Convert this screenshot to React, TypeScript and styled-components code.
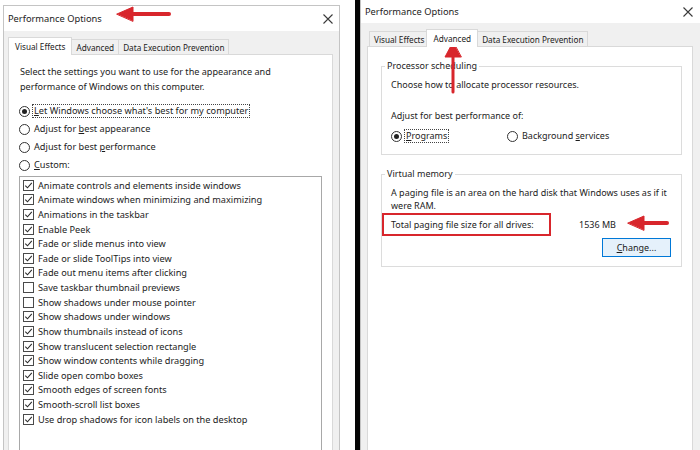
import React from "react";
import styled, { createGlobalStyle, css } from "styled-components";

const GlobalStyle = createGlobalStyle`
  html, body { margin: 0; padding: 0; background: #ffffff; }
  body {
    font-family: "Noto Sans", "Open Sans", "DejaVu Sans", sans-serif;
    color: #1c1c1c;
    -webkit-font-smoothing: antialiased;
  }
`;

const Page = styled.div`
  position: relative;
  display: flex;
  align-items: flex-start;
  width: 700px;
  height: 450px;
  overflow: hidden;
  background: #ffffff;
`;

const Dialog = styled.section<{ $top: number; $left: number; $width: number }>`
  display: flex;
  flex-direction: column;
  flex-shrink: 0;
  margin-top: ${(p) => p.$top}px;
  margin-left: ${(p) => p.$left}px;
  width: ${(p) => p.$width}px;
  height: 470px;
  border: 1px solid #c4c4c4;
  background: #f0f0f0;
  box-sizing: border-box;
  overflow: hidden;
`;

const TitleBar = styled.header<{ $height: number; $padRight: number }>`
  display: flex;
  flex-shrink: 0;
  align-items: center;
  justify-content: space-between;
  height: ${(p) => p.$height}px;
  padding: 0 ${(p) => p.$padRight}px 0 4px;
  background: #ffffff;
`;

const Title = styled.span`
  font-size: 9.3px;
  color: #222;
`;

const CloseIcon = styled.svg`
  width: 10px;
  height: 10px;
  stroke: #3a3a3a;
  stroke-width: 1.1;
`;

const Body = styled.div<{ $pad: string }>`
  display: flex;
  flex-direction: column;
  flex: 1;
  min-height: 0;
  padding: ${(p) => p.$pad};
`;

const TabStrip = styled.div`
  display: flex;
  flex-shrink: 0;
  align-items: flex-end;
  padding-left: 2px;
`;

const Tab = styled.div<{ $active?: boolean }>`
  position: relative;
  display: flex;
  align-items: center;
  height: 15px;
  padding: 0 4px;
  margin-right: -1px;
  font-size: 8.2px;
  color: #222;
  background: #f0f0f0;
  border: 1px solid #d9d9d9;
  border-bottom: none;
  box-sizing: border-box;
  white-space: nowrap;
  ${(p) =>
    p.$active &&
    css`
      z-index: 2;
      height: 18px;
      margin: 0 -1px -1px -2px;
      padding: 0 6px 1px;
      background: #ffffff;
    `}
`;

const TabPanel = styled.div`
  display: flex;
  flex-direction: column;
  flex: 1;
  min-height: 0;
  background: #ffffff;
  border: 1px solid #d9d9d9;
`;

/* ---------- Visual Effects page ---------- */

const Intro = styled.p`
  margin: 9px 0 0 11px;
  font-size: 9.1px;
  line-height: 15px;
  white-space: nowrap;
`;

const OptionList = styled.div`
  display: flex;
  flex-direction: column;
  margin: 8px 0 0 10px;
`;

const OptionRow = styled.label<{ $height?: number }>`
  display: flex;
  align-items: center;
  gap: 3px;
  height: ${(p) => p.$height ?? 18}px;
  font-size: 9.2px;
  white-space: nowrap;
`;

const RadioDot = styled.span<{ $checked?: boolean }>`
  position: relative;
  flex-shrink: 0;
  width: 11px;
  height: 11px;
  border: 1px solid #333;
  border-radius: 50%;
  box-sizing: border-box;
  background: #fff;
  ${(p) =>
    p.$checked &&
    css`
      &::after {
        content: "";
        position: absolute;
        inset: 2px;
        border-radius: 50%;
        background: #222;
      }
    `}
`;

const FocusLabel = styled.span<{ $focused?: boolean }>`
  padding: 0 1px;
  outline: ${(p) => (p.$focused ? "1px dotted #444" : "none")};
  outline-offset: 0;
  line-height: 12px;
`;

const Key = styled.span`
  text-decoration: underline;
  text-underline-offset: 1px;
`;

const ListBox = styled.div`
  display: flex;
  flex-direction: column;
  flex-shrink: 0;
  margin: 2px 10px 0 10px;
  padding: 1px 0 0 3px;
  height: 300px;
  border: 1px solid #a8a8a8;
`;

const CheckRow = styled.div`
  display: flex;
  align-items: center;
  gap: 4px;
  height: 14.62px;
  font-size: 9.2px;
  white-space: nowrap;
`;

const CheckBox = styled.span`
  display: flex;
  align-items: center;
  justify-content: center;
  flex-shrink: 0;
  width: 11px;
  height: 11px;
  border: 1px solid #4a4a4a;
  box-sizing: border-box;
  background: #fff;
`;

/* ---------- Advanced page ---------- */

const Group = styled.fieldset<{ $top: number; $bottomPad: number }>`
  margin: ${(p) => p.$top}px 10px 0 13px;
  padding: 5px 10px ${(p) => p.$bottomPad}px 9px;
  border: 1px solid #dcdcdc;
  min-width: 0;
`;

const Legend = styled.legend`
  margin-left: -6px;
  padding: 0 2px;
  font-size: 9px;
  line-height: 14px;
`;

const Line = styled.p<{ $gap?: number; $lh?: number }>`
  margin: ${(p) => p.$gap ?? 0}px 0 0 0;
  font-size: 9px;
  line-height: ${(p) => p.$lh ?? 14}px;
  white-space: nowrap;
`;

const RadioPair = styled.div`
  display: flex;
  margin-top: 6px;
`;

const PairItem = styled(OptionRow)`
  width: 116px;
  height: 14px;
  font-size: 9px;
`;

const SizeRow = styled.div`
  display: flex;
  align-items: center;
  margin: 1px 0 0 -9px;
  font-size: 9px;
  white-space: nowrap;
`;

const Highlight = styled.div`
  display: flex;
  align-items: center;
  width: 169px;
  height: 23px;
  padding-left: 7px;
  border: 2px solid #d8262c;
  box-sizing: border-box;
`;

const SizeValue = styled.span`
  margin-left: 28px;
`;

const ButtonRow = styled.div`
  display: flex;
  justify-content: flex-end;
  margin-top: 2px;
`;

const Button = styled.button`
  width: 69px;
  height: 19px;
  padding: 0;
  font-family: inherit;
  font-size: 9px;
  color: #1c1c1c;
  background: #e5f1fb;
  border: 1px solid #0078d7;
`;

const Divider = styled.div`
  flex-shrink: 0;
  align-self: stretch;
  width: 5px;
  margin-left: 15px;
  background: #050505;
`;

const Annotations = styled.svg`
  position: absolute;
  left: 0;
  top: 0;
  width: 700px;
  height: 450px;
  pointer-events: none;
`;

const effects: [string, boolean][] = [
  ["Animate controls and elements inside windows", true],
  ["Animate windows when minimizing and maximizing", true],
  ["Animations in the taskbar", true],
  ["Enable Peek", true],
  ["Fade or slide menus into view", true],
  ["Fade or slide ToolTips into view", true],
  ["Fade out menu items after clicking", true],
  ["Save taskbar thumbnail previews", false],
  ["Show shadows under mouse pointer", false],
  ["Show shadows under windows", true],
  ["Show thumbnails instead of icons", true],
  ["Show translucent selection rectangle", true],
  ["Show window contents while dragging", true],
  ["Slide open combo boxes", true],
  ["Smooth edges of screen fonts", true],
  ["Smooth-scroll list boxes", true],
  ["Use drop shadows for icon labels on the desktop", true],
];

const Close = () => (
  <CloseIcon viewBox="0 0 10 10">
    <path d="M0.5 0.5 L9.5 9.5 M9.5 0.5 L0.5 9.5" />
  </CloseIcon>
);

const Tick = () => (
  <svg width="9" height="9" viewBox="0 0 9 9">
    <path d="M1.3 4.6 L3.5 6.8 L7.8 1.9" fill="none" stroke="#2a2a2a" strokeWidth="1.1" />
  </svg>
);

const Tabs = ({ active }: { active: number }) => (
  <TabStrip>
    {["Visual Effects", "Advanced", "Data Execution Prevention"].map((t, i) => (
      <Tab key={t} $active={i === active}>
        {t}
      </Tab>
    ))}
  </TabStrip>
);

const VisualEffects = () => (
  <TabPanel>
    <Intro>
      Select the settings you want to use for the appearance and
      <br />
      performance of Windows on this computer.
    </Intro>
    <OptionList>
      <OptionRow>
        <RadioDot $checked />
        <FocusLabel $focused>
          <Key>L</Key>et Windows choose what's best for my computer
        </FocusLabel>
      </OptionRow>
      <OptionRow>
        <RadioDot />
        <FocusLabel>
          Adjust for <Key>b</Key>est appearance
        </FocusLabel>
      </OptionRow>
      <OptionRow>
        <RadioDot />
        <FocusLabel>
          Adjust for best <Key>p</Key>erformance
        </FocusLabel>
      </OptionRow>
      <OptionRow>
        <RadioDot />
        <FocusLabel>
          <Key>C</Key>ustom:
        </FocusLabel>
      </OptionRow>
    </OptionList>
    <ListBox>
      {effects.map(([label, on]) => (
        <CheckRow key={label}>
          <CheckBox>{on && <Tick />}</CheckBox>
          {label}
        </CheckRow>
      ))}
    </ListBox>
  </TabPanel>
);

const AdvancedPage = () => (
  <TabPanel>
    <Group $top={12} $bottomPad={11}>
      <Legend>Processor scheduling</Legend>
      <Line>Choose how to allocate processor resources.</Line>
      <Line $gap={17}>Adjust for best performance of:</Line>
      <RadioPair>
        <PairItem>
          <RadioDot $checked />
          <FocusLabel $focused>
            <Key>P</Key>rograms
          </FocusLabel>
        </PairItem>
        <PairItem>
          <RadioDot />
          <FocusLabel>
            Background <Key>s</Key>ervices
          </FocusLabel>
        </PairItem>
      </RadioPair>
    </Group>
    <Group $top={12} $bottomPad={9}>
      <Legend>Virtual memory</Legend>
      <Line $lh={13}>
        A paging file is an area on the hard disk that Windows uses as if it
        <br />
        were RAM.
      </Line>
      <SizeRow>
        <Highlight>Total paging file size for all drives:</Highlight>
        <SizeValue>1536 MB</SizeValue>
      </SizeRow>
      <ButtonRow>
        <Button>
          <Key>C</Key>hange...
        </Button>
      </ButtonRow>
    </Group>
  </TabPanel>
);

export default function App() {
  return (
    <>
      <GlobalStyle />
      <Page>
        <Dialog $top={5} $left={3} $width={337}>
          <TitleBar $height={25} $padRight={6}>
            <Title>Performance Options</Title>
            <Close />
          </TitleBar>
          <Body $pad="6px 6px 0 4px">
            <Tabs active={0} />
            <VisualEffects />
          </Body>
        </Dialog>
        <Divider />
        <Dialog $top={-1} $left={0} $width={342}>
          <TitleBar $height={23} $padRight={8}>
            <Title>Performance Options</Title>
            <Close />
          </TitleBar>
          <Body $pad="6px 8px 0 6px">
            <Tabs active={1} />
            <AdvancedPage />
          </Body>
        </Dialog>
        <Annotations viewBox="0 0 700 450">
          <g fill="#d8262c" stroke="#d8262c" strokeLinecap="round">
            <line x1="131" y1="14" x2="169" y2="14" strokeWidth="4" />
            <polygon points="117,14 133,7 133,21" strokeWidth="1" />
            <line x1="453" y1="55" x2="453" y2="92" strokeWidth="3" />
            <polygon points="453,42 445,57 461,57" strokeWidth="1" />
            <line x1="642" y1="223" x2="667" y2="223" strokeWidth="4" />
            <polygon points="628,223 644,216 644,230" strokeWidth="1" />
          </g>
        </Annotations>
      </Page>
    </>
  );
}
